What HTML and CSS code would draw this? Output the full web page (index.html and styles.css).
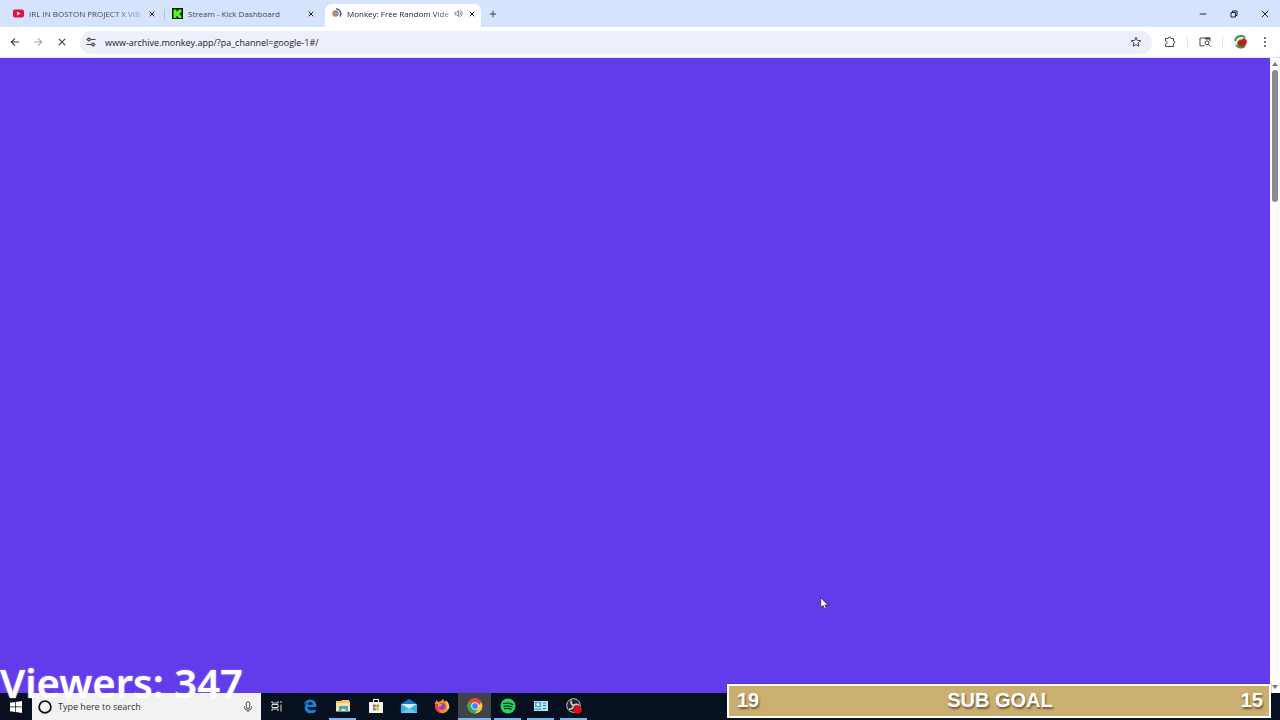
FILE: index.html
```
<!DOCTYPE html>
<html lang="en">
<head>
<meta charset="utf-8">
<title>Monkey: Free Random Video Chat</title>
<link rel="stylesheet" href="styles.css">
</head>
<body>
<div class="desktop">
  <header class="tabstrip">
    <div class="tab">
      <svg class="fav" viewBox="0 0 11 11"><rect y="1.5" width="11" height="8" rx="2" fill="#e5103c"/><path d="M4.2 3.6v3.8L7.6 5.5z" fill="#fff"/></svg>
      <span class="tab-title">IRL IN BOSTON PROJECT X VIB</span>
      <button class="tab-close" aria-label="Close tab"><svg viewBox="0 0 6 6"><path d="M.7.7l4.6 4.6M5.3.7L.7 5.3"/></svg></button>
    </div>
    <div class="tab tab-divided">
      <svg class="fav" viewBox="0 0 11 11"><rect width="11" height="11" fill="#0a1a08"/><path d="M1.5 1.5h3v2h1v-1h1v-1h3v3h-1v1h-1v1h1v1h1v2.500h-3v-1h-1v-1h-1v2h-3z" fill="#53fc18"/></svg>
      <span class="tab-title">Stream - Kick Dashboard</span>
      <button class="tab-close" aria-label="Close tab"><svg viewBox="0 0 6 6"><path d="M.7.7l4.600 4.600M5.300.7L.7 5.300"/></svg></button>
    </div>
    <div class="tab tab-active">
      <svg class="fav" viewBox="0 0 11 11"><circle cx="4.500" cy="5.500" r="3.300" fill="#bd8d72"/><path d="M2.500 4.500l2-1.500 2.500 2-1 3" fill="none" stroke="#8c8791"/><path d="M5 .8a4.800 4.800 0 0 1 3.800 7.700" fill="none" stroke="#244fae" stroke-width="1.300"/></svg>
      <span class="tab-title">Monkey: Free Random Vide</span>
      <svg class="speaker" viewBox="0 0 9 9"><path d="M1 3.300h1.500L4.700 1.500v6L2.500 5.700H1zM6 3.200q1 1.300 0 2.600M6.500 1.300q3.300 3.200 0 6.400" fill="none" stroke="#666" stroke-width=".8"/></svg>
      <button class="tab-close" aria-label="Close tab"><svg viewBox="0 0 6 6"><path d="M.7.7l4.600 4.600M5.300.7L.7 5.300"/></svg></button>
    </div>
    <button class="new-tab" aria-label="New tab"><svg viewBox="0 0 8 8"><path d="M4 .8v6.400M.8 4h6.400"/></svg></button>
    <div class="window-buttons">
      <button aria-label="Minimize"><svg viewBox="0 0 8 8"><path d="M.7 4h6.600"/></svg></button>
      <button aria-label="Restore"><svg viewBox="0 0 8 8"><path d="M1 2.500h4.500V7H1zM2.500 2.500V1H7v4.500H5.500"/></svg></button>
      <button aria-label="Close"><svg viewBox="0 0 8 8"><path d="M.8.8l6.400 6.400M7.200.8L.8 7.200"/></svg></button>
    </div>
  </header>

  <nav class="toolbar">
    <button class="tool" aria-label="Back"><svg viewBox="0 0 10 10"><path d="M9 5H1.500M5 1.300L1.300 5 5 8.700"/></svg></button>
    <button class="tool tool-off" aria-label="Forward" disabled><svg viewBox="0 0 10 10"><path d="M1 5h7.500M5 1.300L8.700 5 5 8.700"/></svg></button>
    <button class="tool" aria-label="Stop loading"><svg viewBox="0 0 10 10"><path d="M1.800 1.800l6.400 6.400M8.200 1.800L1.800 8.200"/></svg></button>
    <div class="address">
      <button class="site-info" aria-label="Site information"><svg viewBox="0 0 10 10"><path d="M.5 2.500h1M4.800 2.500H9.500M.5 7.500h4.700M8.500 7.500h1"/><circle cx="3" cy="2.500" r="1.300"/><circle cx="7" cy="7.500" r="1.300"/></svg></button>
      <input class="url" aria-label="Address" value="www-archive.monkey.app/?pa_channel=google-1#/">
      <button class="star" aria-label="Bookmark this page"><svg viewBox="0 0 12 12"><path d="M6 1.300l1.300 3.100 3.400.3L8.100 6.900l.8 3.300L6 8.500l-2.900 1.700.8-3.300L1.300 4.700l3.400-.3z"/></svg></button>
    </div>
    <div class="extensions">
      <button aria-label="Extensions"><svg viewBox="0 0 12 12"><path d="M1.500 2.500h2.700C4.200.6 7 .6 7 2.500h2.500V5c1.800 0 1.800 2.500 0 2.500v3h-8V8c2 0 2-3 0-3z"/></svg></button>
      <span class="separator"></span>
      <button aria-label="Search side panel"><svg viewBox="0 0 12 12"><path d="M5.500 9.800H1V2h10v3.500"/><path d="M6 2.500h5" stroke-width="2"/><circle cx="8" cy="6.800" r="1.900"/><path d="M9.400 8.200l2 2.300"/></svg></button>
      <span class="separator"></span>
      <button class="profile" aria-label="Profile"><svg viewBox="0 0 14 14"><circle cx="7" cy="7" r="6.500" fill="#e9eee4" stroke="none"/><path d="M1 6a6 6 0 0 1 10-3.500M2 10a6 6 0 0 0 9 1" stroke="#369b59" stroke-width="2"/><path d="M3 8.500q1-4 4.500-4l3-1.500 2.500 3-1 4-4 2-3-.5z" fill="#bd281d" stroke="none"/><path d="M5 7l3 2 2-3" stroke="#643c23"/></svg></button>
      <button aria-label="Menu"><svg viewBox="0 0 12 12"><g fill="#444" stroke="none"><circle cx="6" cy="2" r="1"/><circle cx="6" cy="6" r="1"/><circle cx="6" cy="10" r="1"/></g></svg></button>
    </div>
  </nav>

  <main class="viewport">
    <div class="page"></div>
    <div class="scrollbar">
      <svg viewBox="0 0 6 4"><path d="M3 0l3 4H0z"/></svg>
      <div class="thumb"></div>
      <svg class="scroll-down" viewBox="0 0 6 4"><path d="M3 4l3-4H0z"/></svg>
    </div>
  </main>

  <footer class="taskbar">
    <button class="start" aria-label="Start"><svg viewBox="0 0 12 12"><path d="M0 1.700l5-.7v4.600H0zM5.700.9L12 0v5.600H5.700zM0 6.300h5V11l-5-.7zM5.700 6.300H12V12l-6.300-.9z" fill="#fff"/></svg></button>
    <label class="search">
      <svg class="cortana" viewBox="0 0 14 14"><circle cx="7" cy="7" r="5.900" fill="none" stroke="#111" stroke-width="1.700"/></svg>
      <input placeholder="Type here to search" aria-label="Type here to search">
      <svg class="mic" viewBox="0 0 10 12"><rect x="3.300" y=".8" width="3.400" height="6.700" rx="1.700"/><path d="M1.500 5.500v1.200q0 2.500 3.500 2.500t3.500-2.500V5.500M5 9.200v2"/></svg>
    </label>
    <div class="apps">
      <button class="app" aria-label="Task view"><svg viewBox="0 0 16 16"><path d="M3 3v2h6V3M3 13v-2h6v2M3 6.500h6v3H3zM12 3v2M12 6.500v7" fill="none" stroke="#ddd"/></svg></button>
      <button class="app" aria-label="Edge"><svg viewBox="0 0 16 16"><path d="M1.500 7.500Q2.700 1.500 8.300 1.400 14.500 1.500 14.500 9H5.600q.4 3.300 4 3.300 2.200 0 4-1v2.800q-2 1.200-5 1.200-5.900-.2-5.900-5.600 0-3.300 3-5.200-2.800.7-4.200 3zM5.700 6.700h5Q10.600 4 8.300 4 6.200 4.100 5.700 6.700z" fill="#1683d8"/></svg></button>
      <button class="app app-open" aria-label="File Explorer"><svg viewBox="0 0 16 16"><path d="M1 3h5l1-1h7l1 2v9H1z" fill="#efc75e"/><path d="M1 5h14v8.500H1z" fill="#fbe49a"/><path d="M4 8h9v6h-2.500v-3h-4v3H4z" fill="#42a9cb"/></svg></button>
      <button class="app" aria-label="Store"><svg viewBox="0 0 16 16"><path d="M5.500 4V1.500h5V4" fill="none" stroke="#eee" stroke-width="1.200"/><path d="M1 4h14v11H1z" fill="#f4f4f4"/><path d="M5 6.500h2.700v2.700H5z" fill="#e75329"/><path d="M8.300 6.500H11v2.700H8.300z" fill="#77b72e"/><path d="M5 9.800h2.700v2.700H5z" fill="#229dda"/><path d="M8.300 9.800H11v2.700H8.300z" fill="#f4b71b"/></svg></button>
      <button class="app" aria-label="Mail"><svg viewBox="0 0 16 16"><path d="M0 6l8-5 8 5v9H0z" fill="#167bc3"/><path d="M0 6l8 5 8-5v9H0z" fill="#38aee7"/><path d="M0 6h16l-8 5z" fill="#d4edf8"/><path d="M0 15l8-5 8 5z" fill="#65c9ef"/></svg></button>
      <button class="app" aria-label="Firefox"><svg viewBox="0 0 16 16"><path d="M1 5l1.500-3L4 4l3-1 2-2 2 3 2-1q2.500 3 2.300 6A7.200 7.200 0 0 1 1 9z" fill="#ff8a24"/><path d="M11 2q5 4 4 8l-2 2V7z" fill="#ffd33f"/><path d="M1 6q0 8 7 9.200Q3 12 4 6z" fill="#ef3157"/><circle cx="8" cy="8.500" r="3.400" fill="#8c3ed0"/><path d="M4 6q3-1 4 1L5.500 9z" fill="#ff9a2a"/></svg></button>
      <button class="app app-open app-current" aria-label="Chrome"><svg viewBox="0 0 16 16"><circle cx="8" cy="8" r="7.500" fill="#fbc934"/><path d="M8 8L1.500 4.250A7.500 7.500 0 0 1 14.500 4.250z" fill="#e64435"/><path d="M8 8L1.500 4.250A7.500 7.500 0 0 0 8 15.500l3.500-5.500z" fill="#34a853"/><path d="M8 4.250h6.500L11 8z" fill="#e64435"/><circle cx="8" cy="8" r="3.700" fill="#fff"/><circle cx="8" cy="8" r="2.900" fill="#4285f4"/></svg></button>
      <button class="app app-open" aria-label="Spotify"><svg viewBox="0 0 16 16"><circle cx="8" cy="8" r="7.500" fill="#27d565"/><path d="M3.500 5.700q5-1.500 9.300.8M4 8.300q4.400-1.200 8 .7M4.500 10.700q3.800-.9 6.500.7" fill="none" stroke="#092e18" stroke-width="1.300" stroke-linecap="round"/></svg></button>
      <button class="app app-open" aria-label="Control panel"><svg viewBox="0 0 16 16"><path d="M1 3h14v10H1z" fill="#b5e2f7"/><path d="M2 4h6v5H2zM2 10.500h6V12H2z" fill="#49a7d6"/><circle cx="5" cy="6.500" r="1.500" fill="#fff"/><path d="M10 5h3M10 7.500h3M10 10.500h3" stroke="#2384bb"/></svg></button>
      <button class="app app-open" aria-label="OBS Studio"><svg viewBox="0 0 16 16"><circle cx="7.500" cy="7.500" r="6.800" fill="#25232a" stroke="#ccc"/><path d="M7.500 7.500Q4 6 5.500 2.500M7.500 7.500Q11 5 13 8M7.500 7.500Q7 11.500 3 11" fill="none" stroke="#ccc" stroke-width="1.700"/><circle cx="11.800" cy="11.500" r="4" fill="#e50914"/></svg></button>
    </div>
  </footer>

  <div class="viewers">Viewers: 347</div>
  <section class="goal" aria-label="Subscriber goal"><span>19</span><span>SUB GOAL</span><span class="goal-target">15</span></section>
  <svg class="cursor" viewBox="0 0 9 13"><path d="M.7.700v9.800l2.400-2 1.800 3.800 1.700-.8L4.900 8h3.300z" fill="#fff" stroke="#302052" stroke-width=".8"/></svg>
</div>
</body>
</html>
```
FILE: styles.css
```
* { box-sizing: border-box; }
body { margin: 0; font-family: "Open Sans", "Noto Sans", sans-serif; }
button { display: flex; align-items: center; justify-content: center; flex: none; margin: 0; padding: 0; border: 0; background: none; }
svg { display: block; flex: none; }
input { min-width: 0; padding: 0; border: 0; outline: 0; background: none; font-family: inherit; }
button svg { fill: none; stroke: #444; }

.desktop { position: relative; display: flex; flex-direction: column; height: 100vh; overflow: hidden; background: #fff; }

.tabstrip { display: flex; height: 27px; flex: none; background: #d5e3fd; }
.tab { position: relative; display: flex; align-items: center; gap: 5px; width: 159px; padding: 0 8px; font-size: 8px; color: #3f4859; }
.tab:first-child { width: 164px; padding-left: 13px; }
.tab-divided::before { content: ""; position: absolute; left: 0; top: 9px; width: 1px; height: 10px; background: #adbfdd; }
.tab-active { width: 156px; margin-top: 4px; margin-left: 2px; padding: 0 8px 4px 6px; border-radius: 7px 7px 0 0; background: #fff; color: #222; }
.tab-title { flex: 1; white-space: nowrap; }
.tab:not(.tab-divided) .tab-title { mask-image: linear-gradient(to right, #000 85px, #0004 112px); }
.fav { width: 11px; height: 11px; }
.speaker { width: 9px; height: 9px; }
.tab-close { width: 8px; height: 12px; }
.tab-close svg { width: 6px; height: 6px; stroke: #222; }
.new-tab { width: 24px; }
.new-tab svg { width: 8px; height: 8px; }
.window-buttons { display: flex; gap: 15px; margin-left: auto; padding-right: 7px; }
.window-buttons button { width: 16px; }
.window-buttons svg { width: 8px; height: 8px; stroke: #223; }

.toolbar { display: flex; align-items: center; height: 31px; flex: none; padding: 0 9px 0 6px; background: #fff; border-bottom: 1px solid #e5e5ee; }
.tool { width: 24px; height: 24px; }
.tool:first-child { width: 17px; margin-right: 3px; }
.tool svg { width: 10px; height: 10px; stroke-width: 1.2; }
.tool-off svg { stroke: #aaa; }
.address { display: flex; align-items: center; flex: 1; height: 23px; margin-left: 6px; padding: 0 10px 0 6px; border-radius: 12px; background: #ecf0fb; }
.site-info svg { width: 10px; height: 10px; stroke-width: 1.2; }
.url { flex: 1; height: 20px; margin-left: 9px; font-size: 9px; color: #222; }
.star svg { width: 12px; height: 12px; }
.extensions { display: flex; align-items: center; gap: 11px; margin-left: 12px; }
.extensions svg { width: 12px; height: 12px; }
.extensions .profile svg { width: 14px; height: 14px; }
.extensions button:last-child { width: 12px; }
.separator { width: 1px; height: 10px; background: #d9e0ee; }

.viewport { display: flex; flex: 1; min-height: 0; }
.page { flex: 1; background: #623beb; }
.scrollbar { display: flex; flex-direction: column; align-items: center; width: 10px; padding: 4px 0; background: #fcfcfd; }
.scrollbar svg { width: 6px; height: 4px; fill: #777; }
.thumb { width: 6px; height: 21%; margin-top: 4px; border-radius: 3px; background: #8b8b8b; }
.scroll-down { margin-top: auto; }

.taskbar { display: flex; height: 27px; flex: none; background: #07101f; }
.start { width: 32px; }
.start svg { width: 12px; height: 12px; stroke: none; }
.search { display: flex; align-items: center; width: 229px; padding: 0 8px 0 6px; background: #f2f2f2; }
.cortana { width: 14px; height: 14px; }
.search input { flex: 1; margin-left: 6px; font-size: 9px; }
.search input::placeholder { color: #333; opacity: 1; }
.mic { width: 10px; height: 12px; fill: none; stroke: #444; }
.apps { display: flex; margin-left: -1px; }
.app { width: 33px; border-bottom: 2px solid transparent; }
.app svg { width: 16px; height: 16px; stroke: none; }
.app-open { width: 27px; margin: 0 3px; border-bottom-color: #79b7ee; }
.app-current { width: 33px; margin: 0; background: #414349; }

.viewers { position: absolute; left: 0; bottom: 9px; color: #fff; font-family: "Noto Sans", "Open Sans", sans-serif; font-size: 40px; line-height: 56px; font-weight: 600; text-shadow: 0 0 2px #ffffff80; }
.goal { position: absolute; right: 9px; bottom: 2px; display: grid; grid-template-columns: 1fr auto 1fr; align-items: center; width: 544px; height: 34px; padding: 0 6px 2px 8px; border: 2px solid #fff; background: #cbaf70; color: #fff; font: bold 20px "Liberation Sans", Arial, sans-serif; text-shadow: 1px 2px 2px #6b5839; box-shadow: 0 0 1px #222; }
.goal-target { text-align: right; }
.cursor { position: absolute; left: 820px; top: 597px; width: 9px; height: 13px; }
```
